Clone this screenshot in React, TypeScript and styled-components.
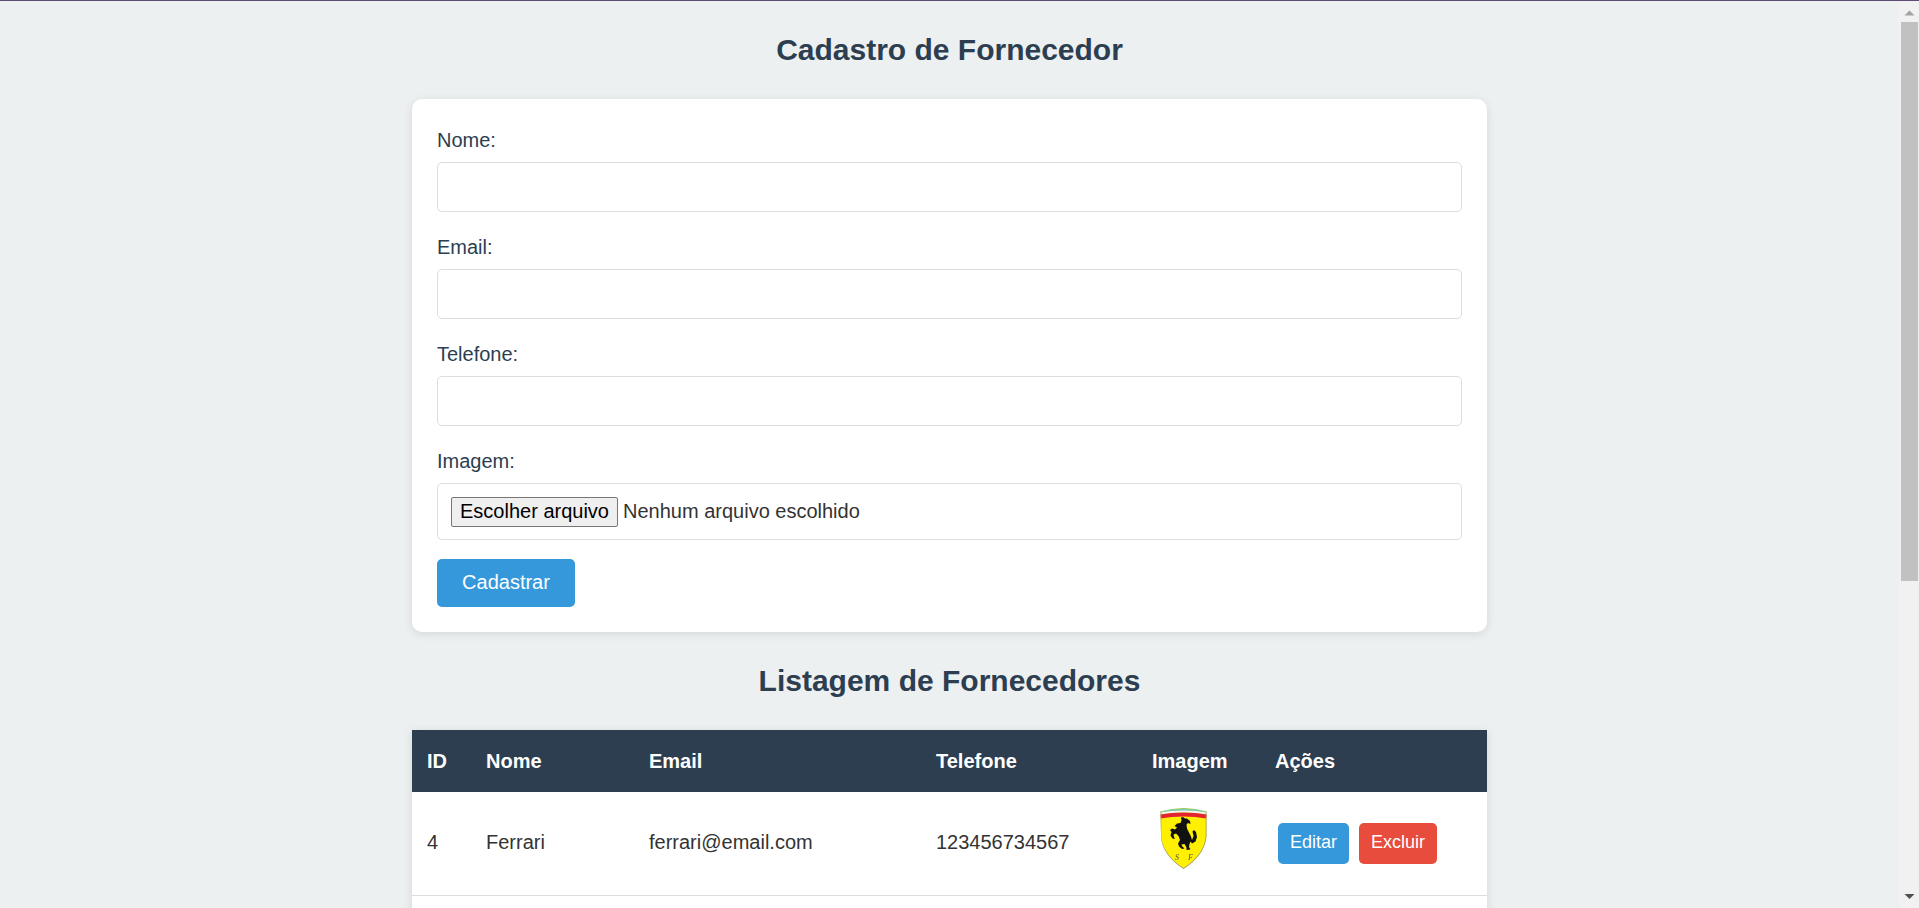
import React from "react";
import styled, { createGlobalStyle } from "styled-components";

const Global = createGlobalStyle`
  html { background: #ecf0f1; }
  body {
    margin: 0;
    padding-right: 20px;
    font-family: "Liberation Sans", Arial, sans-serif;
    color: #2c3e50;
    background: #ecf0f1;
    border-top: 1px solid #5f4b74;
  }
`;

const Page = styled.main`
  width: 1075px;
  margin: 0 auto;
`;

const Title = styled.h2`
  margin: 32px 0;
  font-size: 30px;
  line-height: 34px;
  font-weight: 700;
  text-align: center;
  color: #2c3e50;
`;

const Card = styled.form`
  display: flex;
  flex-direction: column;
  align-items: flex-start;
  padding: 31px 25px 25px;
  height: 533px;
  box-sizing: border-box;
  background: #fff;
  border-radius: 10px;
  box-shadow: 0 2px 10px rgba(0, 0, 0, 0.1);
`;

const Label = styled.label`
  display: block;
  height: 20px;
  margin-bottom: 12px;
  font-size: 20px;
  line-height: 20px;
  color: #2c3e50;
`;

const TextInput = styled.input`
  display: block;
  width: 100%;
  height: 50px;
  margin-bottom: 25px;
  box-sizing: border-box;
  border: 1px solid #ddd;
  border-radius: 5px;
  outline: none;
  background: #fff;
`;

const FilePicker = styled.div`
  display: flex;
  align-items: center;
  gap: 5px;
  width: 100%;
  height: 57px;
  margin-bottom: 19px;
  padding-left: 13px;
  box-sizing: border-box;
  border: 1px solid #ddd;
  border-radius: 5px;
  background: #fff;
  font-size: 20px;
  color: #333;
`;

const FileButton = styled.button`
  width: 167px;
  height: 30px;
  padding: 0;
  box-sizing: border-box;
  border: 1px solid #767676;
  border-radius: 2px;
  background: #efefef;
  font: 20px "Liberation Sans", Arial, sans-serif;
  color: #000;
`;

const Submit = styled.button`
  width: 138px;
  height: 48px;
  padding: 0 0 2px;
  border: 0;
  border-radius: 5px;
  background: #3498db;
  color: #fff;
  font: 20px "Liberation Sans", Arial, sans-serif;
`;

const Table = styled.table`
  width: 100%;
  table-layout: fixed;
  border-collapse: collapse;
  background: #fff;
  box-shadow: 0 2px 10px rgba(0, 0, 0, 0.1);
`;

const Head = styled.th`
  height: 62px;
  padding: 0 0 0 15px;
  box-sizing: border-box;
  background: #2c3e50;
  color: #fff;
  font-size: 20px;
  font-weight: 700;
  text-align: left;
`;

const Row = styled.tr`
  height: 103px;
  border-bottom: 1px solid #ddd;
`;

const Cell = styled.td`
  padding: 0 0 2px 15px;
  font-size: 20px;
  color: #333;
  vertical-align: middle;
`;

const Logo = styled.svg`
  display: block;
  width: 47px;
  height: 61px;
  margin: 0 0 8px 8px;
  filter: blur(0.35px);
`;

const Actions = styled.div`
  display: flex;
  gap: 10px;
  margin: 2px 0 0 3px;
`;

const ActionButton = styled.button<{ $bg: string; $w: number }>`
  width: ${(p) => p.$w}px;
  height: 41px;
  padding: 0 0 2px;
  border: 0;
  border-radius: 5px;
  background: ${(p) => p.$bg};
  color: #fff;
  font: 18px "Liberation Sans", Arial, sans-serif;
`;

const Scrollbar = styled.div`
  position: fixed;
  top: 1px;
  right: 0;
  bottom: 0;
  width: 20px;
  display: flex;
  flex-direction: column;
  background: #f1f1f1;
`;

const ScrollArrow = styled.svg`
  display: block;
  width: 20px;
  height: 21px;
  flex: none;
`;

const ScrollThumb = styled.div`
  width: 17px;
  height: 559px;
  margin-left: 2px;
  background: #c1c1c1;
`;

const ScrollSpacer = styled.div`
  flex: 1;
`;

const FerrariLogo = () => (
  <Logo viewBox="0 0 47 61">
    <defs>
      <clipPath id="shield">
        <path d="M0.5 3.5Q23.5 -3.5 46.5 3.5V28Q45 47 23.5 61Q2 47 1 28Z" />
      </clipPath>
    </defs>
    <g clipPath="url(#shield)">
      <rect width="47" height="61" fill="#fff000" />
      <path d="M0 3.5Q23.5 -0.5 47 3.5" fill="none" stroke="#82c9a3" strokeWidth="3" />
      <path d="M0 5.5Q23.5 1.5 47 5.5" fill="none" stroke="#f3f3f3" strokeWidth="2" />
      <path d="M0 8.5Q23.5 4.5 47 8.5" fill="none" stroke="#e3232f" strokeWidth="4" />
      <path d="M0.5 3.5V28Q2 47 23.5 61Q45 47 46.5 28V3.5" fill="none" stroke="#9c9c88" strokeWidth="1.6" />
    </g>
    <path
      d="M21 9.5L23 9L25 10.5L27 10.5L30 13L30.5 16L28 15L26.5 16.5L27 20.5L29 24.5L31 28.5L32 32L33.5 28L32.5 23.5L34 22L36 24L37 29L35.5 33.5L32 35.5L30.5 33.5L29.5 36L29 39L30.5 41.5L26.5 42L26.5 39.5L24.5 36L21.5 36.5L22 38L24.5 40.5L22 41L19 38.5L18 35.5L20 32L18.5 28L16 25.5L13.5 26.5L14 29L15 31L12.5 30.5L10.5 27.5L11.5 24L10 22L12 20.5L15 21.5L17 19.5L14.5 18L17 15.5L20.5 15L21.5 12.5Z"
      fill="#111"
    />
    <text x="15" y="52" fontFamily="Liberation Serif, serif" fontStyle="italic" fontSize="8" fill="#555">S</text>
    <text x="28" y="52" fontFamily="Liberation Serif, serif" fontStyle="italic" fontSize="8" fill="#555">F</text>
  </Logo>
);

const columns = [
  { name: "ID", width: 59 },
  { name: "Nome", width: 163 },
  { name: "Email", width: 287 },
  { name: "Telefone", width: 216 },
  { name: "Imagem", width: 123 },
  { name: "Ações", width: 227 },
];

const fields = ["Nome:", "Email:", "Telefone:"];

export default function App() {
  return (
    <Page>
      <Global />
      <Title>Cadastro de Fornecedor</Title>
      <Card onSubmit={(e) => e.preventDefault()}>
        {fields.map((f) => (
          <React.Fragment key={f}>
            <Label>{f}</Label>
            <TextInput type="text" />
          </React.Fragment>
        ))}
        <Label>Imagem:</Label>
        <FilePicker>
          <FileButton type="button">Escolher arquivo</FileButton>
          <span>Nenhum arquivo escolhido</span>
        </FilePicker>
        <Submit type="submit">Cadastrar</Submit>
      </Card>
      <Title>Listagem de Fornecedores</Title>
      <Table>
        <colgroup>
          {columns.map((c) => (
            <col key={c.name} style={{ width: c.width }} />
          ))}
        </colgroup>
        <thead>
          <tr>
            {columns.map((c) => (
              <Head key={c.name}>{c.name}</Head>
            ))}
          </tr>
        </thead>
        <tbody>
          <Row>
            <Cell>4</Cell>
            <Cell>Ferrari</Cell>
            <Cell>ferrari@email.com</Cell>
            <Cell>123456734567</Cell>
            <Cell><FerrariLogo /></Cell>
            <Cell>
              <Actions>
                <ActionButton type="button" $bg="#3498db" $w={71}>Editar</ActionButton>
                <ActionButton type="button" $bg="#e74c3c" $w={78}>Excluir</ActionButton>
              </Actions>
            </Cell>
          </Row>
          {[0, 1, 2, 3, 4].map((i) => (
            <Row key={i} aria-hidden="true">
              <Cell colSpan={6} />
            </Row>
          ))}
        </tbody>
      </Table>
      <Scrollbar aria-hidden="true">
        <ScrollArrow viewBox="0 0 20 21">
          <path d="M10.5 9.5l5 5h-10z" fill="#a3a3a3" />
        </ScrollArrow>
        <ScrollThumb />
        <ScrollSpacer />
        <ScrollArrow viewBox="0 0 20 21">
          <path d="M5.5 7h10l-5 5z" fill="#505050" />
        </ScrollArrow>
      </Scrollbar>
    </Page>
  );
}
